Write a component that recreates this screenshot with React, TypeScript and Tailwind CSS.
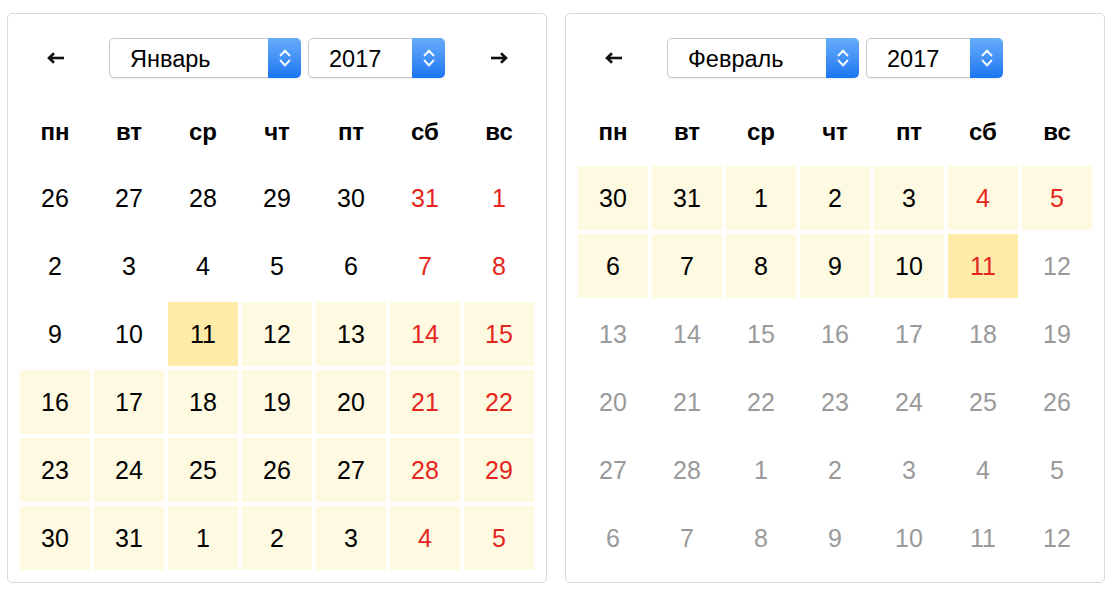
import React from "react";

type Cell = { d: number; kind: "norm" | "red" | "grey"; bg: "none" | "range" | "today" };

const N = (d: number, bg: Cell["bg"] = "none"): Cell => ({ d, kind: "norm", bg });
const R = (d: number, bg: Cell["bg"] = "none"): Cell => ({ d, kind: "red", bg });
const G = (d: number): Cell => ({ d, kind: "grey", bg: "none" });

const jan: Cell[][] = [
  [N(26), N(27), N(28), N(29), N(30), R(31), R(1)],
  [N(2), N(3), N(4), N(5), N(6), R(7), R(8)],
  [N(9), N(10), N(11, "today"), N(12, "range"), N(13, "range"), R(14, "range"), R(15, "range")],
  [N(16, "range"), N(17, "range"), N(18, "range"), N(19, "range"), N(20, "range"), R(21, "range"), R(22, "range")],
  [N(23, "range"), N(24, "range"), N(25, "range"), N(26, "range"), N(27, "range"), R(28, "range"), R(29, "range")],
  [N(30, "range"), N(31, "range"), N(1, "range"), N(2, "range"), N(3, "range"), R(4, "range"), R(5, "range")],
];

const feb: Cell[][] = [
  [N(30, "range"), N(31, "range"), N(1, "range"), N(2, "range"), N(3, "range"), R(4, "range"), R(5, "range")],
  [N(6, "range"), N(7, "range"), N(8, "range"), N(9, "range"), N(10, "range"), R(11, "today"), G(12)],
  [G(13), G(14), G(15), G(16), G(17), G(18), G(19)],
  [G(20), G(21), G(22), G(23), G(24), G(25), G(26)],
  [G(27), G(28), G(1), G(2), G(3), G(4), G(5)],
  [G(6), G(7), G(8), G(9), G(10), G(11), G(12)],
];

const days = ["пн", "вт", "ср", "чт", "пт", "сб", "вс"];

function ArrowLeft() {
  return (
    <svg width="18" height="12" viewBox="0 0 18 12" fill="none">
      <path d="M17 6H3" stroke="#111" strokeWidth="2.6" />
      <path d="M7 1.2L2 6l5 4.8" stroke="#111" strokeWidth="2.6" strokeLinejoin="miter" />
    </svg>
  );
}

function ArrowRight() {
  return (
    <svg width="18" height="12" viewBox="0 0 18 12" fill="none">
      <path d="M1 6h14" stroke="#111" strokeWidth="2.6" />
      <path d="M11 1.2L16 6l-5 4.8" stroke="#111" strokeWidth="2.6" strokeLinejoin="miter" />
    </svg>
  );
}

function Select({ label, width }: { label: string; width: string }) {
  return (
    <div
      className={`flex h-[40px] ${width} items-stretch rounded-[5px] border border-[#c9c9c9] bg-white shadow-[0_1px_1px_rgba(0,0,0,0.08)]`}
    >
      <div className="flex flex-1 items-center pl-[20px] pt-[3px] text-[23.5px] text-black">{label}</div>
      <div className="-my-px -mr-px flex w-[33px] items-center justify-center rounded-r-[5px] bg-gradient-to-b from-[#67acfa] to-[#1876f2]">
        <svg width="12" height="22" viewBox="0 0 12 22" fill="none">
          <path d="M1.6 8.4L6 3.6l4.4 4.8" stroke="white" strokeWidth="2" strokeLinecap="round" strokeLinejoin="round" />
          <path d="M1.6 13.6L6 18.4l4.4-4.8" stroke="white" strokeWidth="2" strokeLinecap="round" strokeLinejoin="round" />
        </svg>
      </div>
    </div>
  );
}

function Calendar({ month, rows, showNext }: { month: string; rows: Cell[][]; showNext: boolean }) {
  return (
    <div className="w-[540px] rounded-[5px] border border-[#d9d9d9] bg-white p-3">
      <div className="flex h-[64px] items-center">
        <div className="flex w-[70px] justify-center pl-px">
          <ArrowLeft />
        </div>
        <div className="flex flex-1 justify-center gap-[7px]">
          <Select label={month} width="w-[192px]" />
          <Select label="2017" width="w-[137px]" />
        </div>
        <div className="flex w-[70px] justify-center">{showNext ? <ArrowRight /> : null}</div>
      </div>
      <div className="mt-2 grid h-[64px] grid-cols-7 gap-x-1">
        {days.map((d) => (
          <div key={d} className="flex items-center justify-center pt-[3px] text-[24px] font-bold text-black">
            {d}
          </div>
        ))}
      </div>
      <div className="mt-1 grid grid-cols-7 gap-1">
        {rows.flat().map((c, i) => (
          <div
            key={i}
            className={`flex h-[64px] items-center justify-center pt-[2px] text-[25px] ${
              c.bg === "range" ? "bg-[#fef9e1]" : c.bg === "today" ? "bg-[#feeba8]" : ""
            } ${c.kind === "red" ? "text-[#e52620]" : c.kind === "grey" ? "text-[#9a9a9a]" : "text-black"}`}
          >
            {c.d}
          </div>
        ))}
      </div>
    </div>
  );
}

export default function App() {
  return (
    <div
      className="flex h-[590px] w-[1112px] items-start gap-[18px] bg-white pl-[7px] pt-[13px]"
      style={{ fontFamily: '"Liberation Sans", Arial, sans-serif' }}
    >
      <Calendar month="Январь" rows={jan} showNext />
      <Calendar month="Февраль" rows={feb} showNext={false} />
    </div>
  );
}
